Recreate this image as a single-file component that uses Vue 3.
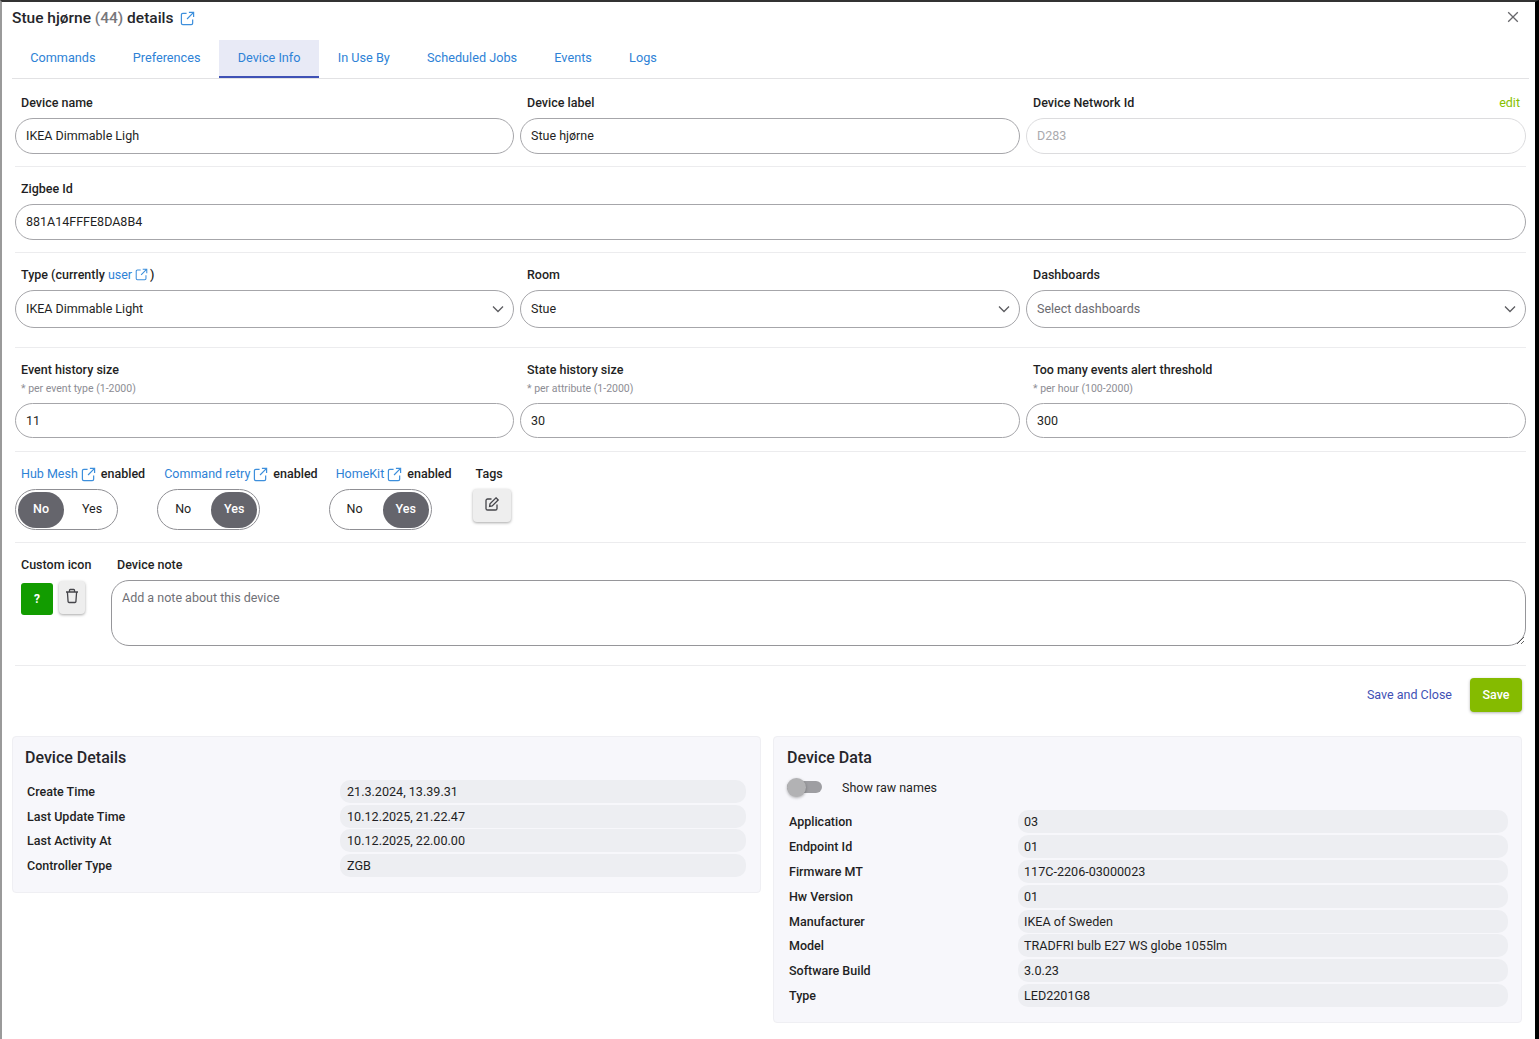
<template>
  <div class="page">
    <div class="modal">
      <header class="title-row">
        <h1 class="title">Stue hjørne <span class="count">(44)</span> details</h1>
        <svg class="ext title-ext" viewBox="0 0 16 16"><path :d="extPath" /></svg>
        <svg class="close" viewBox="0 0 12 12"><path d="M1.2 1.2 10.8 10.8M10.8 1.2 1.2 10.8" /></svg>
      </header>

      <nav class="tabs">
        <a v-for="tab in tabs" :key="tab" class="tab" :class="{ active: tab === 'Device Info' }">{{ tab }}</a>
      </nav>

      <section class="row row-names">
        <div class="grid">
          <div class="field">
            <label class="label">Device name</label>
            <input class="input" value="IKEA Dimmable Ligh" />
          </div>
          <div class="field">
            <label class="label">Device label</label>
            <input class="input" value="Stue hjørne" />
          </div>
          <div class="field">
            <label class="label split">Device Network Id <a class="edit">edit</a></label>
            <input class="input disabled" value="D283" disabled />
          </div>
        </div>
      </section>

      <section class="row row-zigbee">
        <div class="field">
          <label class="label">Zigbee Id</label>
          <input class="input" value="881A14FFFE8DA8B4" />
        </div>
      </section>

      <section class="row row-type">
        <div class="grid">
          <div v-for="s in selects" :key="s.label" class="field">
            <label class="label">
              {{ s.label }}
              <template v-if="s.link">
                <a class="link">user</a><svg class="ext small" viewBox="0 0 16 16"><path :d="extPath" /></svg>)
              </template>
            </label>
            <div class="select" :class="{ placeholder: s.placeholder }">
              <span>{{ s.value }}</span>
              <svg class="chevron" viewBox="0 0 12 8"><path d="M1 1.5 6 6.5 11 1.5" /></svg>
            </div>
          </div>
        </div>
      </section>

      <section class="row row-history">
        <div class="grid">
          <div v-for="h in history" :key="h.label" class="field">
            <label class="label">{{ h.label }}</label>
            <span class="hint">{{ h.hint }}</span>
            <input class="input" :value="h.value" />
          </div>
        </div>
      </section>

      <section class="row row-toggles">
        <div class="toggles">
          <div v-for="t in toggles" :key="t.name" class="toggle-group">
            <div class="label toggle-label">
              <a class="link">{{ t.name }}</a>
              <svg class="ext" viewBox="0 0 16 16"><path :d="extPath" /></svg>
              <span>enabled</span>
            </div>
            <div class="switch">
              <span class="opt" :class="{ on: !t.on }">No</span>
              <span class="opt" :class="{ on: t.on }">Yes</span>
            </div>
          </div>
          <div class="tags">
            <div class="label tags-label">Tags</div>
            <button class="icon-btn tag-btn">
              <svg viewBox="0 0 16 16" class="btn-icon"><path d="M7.5 3H3.6A1.6 1.6 0 0 0 2 4.6v7.8A1.6 1.6 0 0 0 3.6 14h7.8a1.6 1.6 0 0 0 1.6-1.6V8.5" /><path d="M12 1.8 14.2 4 8.2 10 5.6 10.4 6 7.8Z" /></svg>
            </button>
          </div>
        </div>
      </section>

      <section class="row row-note">
        <div class="note-layout">
          <div class="custom-icon">
            <div class="label">Custom icon</div>
            <div class="icon-actions">
              <div class="icon-preview">?</div>
              <button class="icon-btn trash-btn">
                <svg viewBox="0 0 16 16" class="btn-icon"><path d="M2 4h12M5.5 4V2.2a.7.7 0 0 1 .7-.7h3.6a.7.7 0 0 1 .7.7V4M3.4 4l.7 9.6a1 1 0 0 0 1 .9h5.8a1 1 0 0 0 1-.9l.7-9.6" /></svg>
              </button>
            </div>
          </div>
          <div class="note">
            <div class="label">Device note</div>
            <textarea class="textarea" placeholder="Add a note about this device"></textarea>
          </div>
        </div>
      </section>

      <div class="actions">
        <a class="save-close">Save and Close</a>
        <button class="save">Save</button>
      </div>

      <div class="cards">
        <section class="card details">
          <h2 class="card-title">Device Details</h2>
          <div v-for="d in details" :key="d[0]" class="data-row">
            <span class="data-key">{{ d[0] }}</span>
            <span class="data-value">{{ d[1] }}</span>
          </div>
        </section>
        <section class="card data">
          <h2 class="card-title">Device Data</h2>
          <div class="raw">
            <span class="raw-switch"><span class="raw-knob"></span></span>
            <span>Show raw names</span>
          </div>
          <div v-for="d in data" :key="d[0]" class="data-row">
            <span class="data-key">{{ d[0] }}</span>
            <span class="data-value">{{ d[1] }}</span>
          </div>
        </section>
      </div>
    </div>
  </div>
</template>

<script setup>
const extPath = 'M7 2.5H3A1.5 1.5 0 0 0 1.5 4v9A1.5 1.5 0 0 0 3 14.5h9a1.5 1.5 0 0 0 1.5-1.5V9M9.5 1.5h5v5M14.5 1.5 7.5 8.5'

const tabs = ['Commands', 'Preferences', 'Device Info', 'In Use By', 'Scheduled Jobs', 'Events', 'Logs']

const selects = [
  { label: 'Type (currently', link: true, value: 'IKEA Dimmable Light' },
  { label: 'Room', value: 'Stue' },
  { label: 'Dashboards', value: 'Select dashboards', placeholder: true }
]

const history = [
  { label: 'Event history size', hint: '* per event type (1-2000)', value: '11' },
  { label: 'State history size', hint: '* per attribute (1-2000)', value: '30' },
  { label: 'Too many events alert threshold', hint: '* per hour (100-2000)', value: '300' }
]

const toggles = [
  { name: 'Hub Mesh', on: false },
  { name: 'Command retry', on: true },
  { name: 'HomeKit', on: true }
]

const details = [
  ['Create Time', '21.3.2024, 13.39.31'],
  ['Last Update Time', '10.12.2025, 21.22.47'],
  ['Last Activity At', '10.12.2025, 22.00.00'],
  ['Controller Type', 'ZGB']
]

const data = [
  ['Application', '03'],
  ['Endpoint Id', '01'],
  ['Firmware MT', '117C-2206-03000023'],
  ['Hw Version', '01'],
  ['Manufacturer', 'IKEA of Sweden'],
  ['Model', 'TRADFRI bulb E27 WS globe 1055lm'],
  ['Software Build', '3.0.23'],
  ['Type', 'LED2201G8']
]
</script>

<style>
html,
body {
  margin: 0;
  background: #fff;
}
</style>

<style scoped>
.page {
  box-sizing: border-box;
  height: 1039px;
  overflow: hidden;
  border-top: 2px solid #333;
  border-left: 2px solid #9a9a9a;
  border-right: 4px solid #000;
  font-family: Roboto, "Liberation Sans", sans-serif;
  font-size: 12.5px;
  color: #1f1f24;
  background: #fff;
}

.modal {
  padding: 0 7px 0 10px;
}

.title-row {
  display: flex;
  align-items: center;
  height: 32px;
  margin-bottom: 6px;
}

.title {
  margin: 0;
  font-size: 15.5px;
  font-weight: 500;
  line-height: 32px;
  color: #26262b;
}

.count {
  color: #77777c;
}

.ext {
  width: 15px;
  height: 15px;
  flex: none;
  fill: none;
  stroke: #3d8fdc;
  stroke-width: 1.3;
}

.title-ext {
  margin-left: 6px;
}

.close {
  width: 12px;
  height: 12px;
  margin-left: auto;
  margin-right: 9px;
  margin-top: -2px;
  fill: none;
  stroke: #66666a;
  stroke-width: 1.3;
}

.tabs {
  display: flex;
  width: 1517px;
  height: 38px;
  border-bottom: 1px solid #e2e2e4;
}

.tab {
  display: flex;
  align-items: center;
  box-sizing: border-box;
  height: 38px;
  padding: 0 18.6px 4px;
  font-size: 12.7px;
  color: #2e82d6;
}

.tab:first-child {
  padding-left: 18.2px;
}

.active {
  background: #e8eaf6;
  border-bottom: 2px solid #3f51b5;
  padding-bottom: 2px;
}

.row {
  margin-left: 3px;
  width: 1511px;
  border-bottom: 1px solid #ececee;
}

.row-names {
  padding: 16px 0 12px;
}

.row-zigbee {
  padding: 14px 0 12px;
}

.row-type {
  padding: 14px 0 19px;
}

.row-history {
  padding: 14px 0 13px;
}

.row-toggles {
  padding: 14px 0 12px;
}

.row-note {
  padding: 14px 0 19px;
}

.grid {
  display: grid;
  grid-template-columns: 499px 500px 500px;
  gap: 6px;
}

.field {
  display: flex;
  flex-direction: column;
}

.label {
  display: block;
  padding: 0 6px;
  font-size: 12.5px;
  font-weight: 500;
  line-height: 16px;
  margin-bottom: 7px;
  color: #1f1f24;
}

.grid .field + .field .label,
.grid .field + .field .hint {
  padding-left: 7px;
}

.split {
  display: flex;
  justify-content: space-between;
}

.edit {
  font-weight: 400;
  color: #86bf00;
}

.link {
  font-weight: 400;
  color: #2e82d6;
}

.small {
  width: 13px;
  height: 13px;
  margin: 0 2px 0 3px;
  vertical-align: -2px;
}

.hint {
  padding: 0 6px;
  margin-top: -4px;
  margin-bottom: 6px;
  font-size: 10.5px;
  line-height: 16px;
  color: #8d8d94;
}

.input {
  box-sizing: border-box;
  width: 100%;
  height: 36px;
  padding: 0 10px 2px;
  border: 1px solid #a6a6aa;
  border-radius: 18px;
  outline: none;
  font: 12.5px Roboto, "Liberation Sans", sans-serif;
  color: #1f1f24;
  background: #fff;
}

.row-history .input {
  height: 35px;
  padding-bottom: 0;
}

.input.disabled {
  border-color: #dcdcde;
  color: #aaaaae;
  -webkit-text-fill-color: #aaaaae;
}

.select {
  box-sizing: border-box;
  display: flex;
  align-items: center;
  justify-content: space-between;
  height: 38px;
  padding: 0 9px 2px 10px;
  border: 1px solid #a6a6aa;
  border-radius: 19px;
}

.placeholder {
  color: #6b6b70;
}

.chevron {
  width: 12px;
  height: 8px;
  margin-top: 2px;
  fill: none;
  stroke: #5c5c60;
  stroke-width: 1.3;
}

.toggles {
  display: flex;
  gap: 6px;
}

.toggle-group {
  display: flex;
  flex-direction: column;
}

.toggle-label {
  display: flex;
  align-items: center;
  gap: 3px;
}

.toggle-group + .toggle-group .toggle-label {
  padding-left: 7px;
}

.toggle-group:nth-child(2) .toggle-label {
  margin-right: -1px;
}

.toggle-label span {
  margin-left: 2px;
}

.switch {
  box-sizing: border-box;
  display: flex;
  align-items: center;
  gap: 5px;
  width: 103px;
  height: 41px;
  padding: 0 2px;
  border: 1px solid #8f8f94;
  border-radius: 21px;
}

.opt {
  display: flex;
  align-items: center;
  justify-content: center;
  box-sizing: border-box;
  width: 46px;
  height: 36px;
  padding-bottom: 2px;
  border-radius: 18px;
}

.opt.on {
  background: #65656c;
  color: #fff;
  font-weight: 500;
}

.tags {
  margin-left: 9px;
}

.tags-label {
  padding: 0 3px;
  margin-bottom: 7px;
}

.icon-btn {
  display: flex;
  align-items: center;
  justify-content: center;
  border: none;
  padding: 0;
  border-radius: 4px;
  background: #eeeeee;
  box-shadow: 0 1px 3px rgba(0, 0, 0, 0.35);
}

.tag-btn {
  width: 38px;
  height: 33px;
  padding-bottom: 4px;
}

.trash-btn {
  width: 26px;
  height: 33px;
  padding-bottom: 4px;
}

.btn-icon {
  width: 16px;
  height: 16px;
  fill: none;
  stroke: #45454a;
  stroke-width: 1.3;
}

.note-layout {
  display: flex;
  gap: 19px;
}

.custom-icon {
  flex: none;
  width: 77px;
}

.custom-icon .label {
  white-space: nowrap;
  margin-bottom: 8px;
}

.icon-actions {
  display: flex;
  gap: 6px;
  padding-left: 6px;
}

.icon-preview {
  display: flex;
  align-items: center;
  justify-content: center;
  width: 32px;
  height: 32px;
  margin-top: 2px;
  border-radius: 3px;
  background: #129c00;
  color: #fff;
  font-weight: 700;
  font-size: 12px;
}

.note {
  flex: 1;
  display: flex;
  flex-direction: column;
}

.textarea {
  box-sizing: border-box;
  display: block;
  width: 100%;
  height: 66px;
  padding: 9px 10px;
  border: 1px solid #96969a;
  border-radius: 18px;
  outline: none;
  font: 12.5px Roboto, "Liberation Sans", sans-serif;
  line-height: 16px;
}

.textarea::placeholder {
  color: #707076;
}

.actions {
  display: flex;
  align-items: center;
  justify-content: flex-end;
  gap: 18px;
  width: 1510px;
  height: 34px;
  margin-top: 12px;
}

.save-close {
  margin-bottom: 2px;
  color: #3f51b5;
}

.save {
  width: 52px;
  height: 34px;
  padding-bottom: 2px;
  border: none;
  border-radius: 4px;
  background: #85bb00;
  color: #fff;
  font: 500 12.5px Roboto, "Liberation Sans", sans-serif;
  box-shadow: 0 1px 3px rgba(0, 0, 0, 0.3);
}

.cards {
  display: flex;
  align-items: flex-start;
  gap: 12px;
  width: 1510px;
  margin-top: 24px;
}

.card {
  flex: 1;
  box-sizing: border-box;
  padding: 12px 14px 14px;
  border: 1px solid #efeff3;
  border-radius: 4px;
  background: #f7f7fb;
}

.details {
  padding-left: 13px;
  padding-bottom: 14.4px;
}

.data {
  padding-right: 13px;
  padding-bottom: 14.3px;
}

.card-title {
  margin: 0 0 12px -1px;
  font-size: 16px;
  font-weight: 500;
  line-height: 18px;
  color: #26262b;
}

.data-row {
  display: flex;
  align-items: center;
  height: 24.9px;
  padding-left: 1px;
}

.details .data-row {
  height: 24.7px;
}

.data-key {
  font-weight: 500;
  flex: none;
}

.details .data-key {
  width: 313px;
}

.data .data-key {
  width: 229px;
}

.data-value {
  box-sizing: border-box;
  flex: 1;
  height: 23px;
  line-height: 23px;
  padding: 0 6px;
  font-size: 12.6px;
  border-radius: 10px;
  background: #edeef2;
}

.details .data-value {
  padding-left: 7px;
}

.raw {
  display: flex;
  align-items: center;
  gap: 20px;
  height: 20px;
  margin: -2px 0 12px -1px;
}

.raw-switch {
  position: relative;
  display: block;
  width: 35px;
  height: 12px;
  border-radius: 6px;
  background: #9e9ea2;
}

.raw-knob {
  position: absolute;
  left: 0;
  top: -3px;
  width: 19px;
  height: 19px;
  border-radius: 50%;
  background: #b2b2b4;
  box-shadow: 0 1px 3px rgba(0, 0, 0, 0.3);
}
</style>
